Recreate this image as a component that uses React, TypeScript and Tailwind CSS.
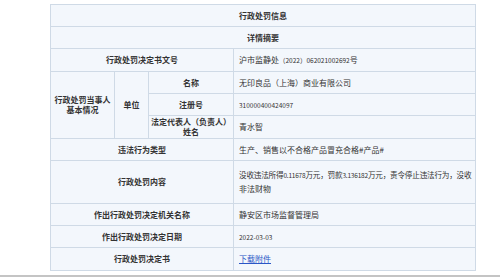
const font = { fontFamily: '"Noto Sans CJK SC", "Noto Sans", sans-serif' };

const label = "border border-[#cfdae6] text-center font-bold text-[#333] text-[8px] leading-[10px]";
const value = "border border-[#cfdae6] text-left pl-[5px] text-[#333] text-[8px]";

function Num({ children }: { children: React.ReactNode }) {
  return <span className="text-[6.5px]">{children}</span>;
}

export default function App() {
  return (
    <div className="w-[500px] h-[277px] bg-white flex flex-col" style={font}>
      <div className="pt-[4px] pl-[50px]">
        <table className="w-[425px] border-collapse bg-[#f3f7fc] table-fixed">
          <colgroup>
            <col className="w-[64px]" />
            <col className="w-[34px]" />
            <col className="w-[85px]" />
            <col className="w-[242px]" />
          </colgroup>
          <tbody>
            <tr className="h-[22px]">
              <td colSpan={4} className={label}>行政处罚信息</td>
            </tr>
            <tr className="h-[22px]">
              <td colSpan={4} className={label}>详情摘要</td>
            </tr>
            <tr className="h-[23px]">
              <td colSpan={3} className={label}>行政处罚决定书文号</td>
              <td className={value}>
                沪市监静处<Num>（2022）062021002692</Num>号
              </td>
            </tr>
            <tr className="h-[22px]">
              <td rowSpan={3} className={label}>
                行政处罚当事人
                <br />
                基本情况
              </td>
              <td rowSpan={3} className={label}>单位</td>
              <td className={label}>名称</td>
              <td className={value}>无印良品（上海）商业有限公司</td>
            </tr>
            <tr className="h-[22px]">
              <td className={label}>注册号</td>
              <td className={value}>
                <Num>310000400424097</Num>
              </td>
            </tr>
            <tr className="h-[23px]">
              <td className={label}>
                法定代表人（负责人）
                <br />
                姓名
              </td>
              <td className={value}>青水智</td>
            </tr>
            <tr className="h-[22px]">
              <td colSpan={3} className={label}>违法行为类型</td>
              <td className={value}>生产、销售以不合格产品冒充合格#产品#</td>
            </tr>
            <tr className="h-[43px]">
              <td colSpan={3} className={label}>行政处罚内容</td>
              <td className={`${value} leading-[14px]`}>
                <div className="whitespace-nowrap text-[7.6px] tracking-[-0.2px]">
                  没收违法所得<Num>0.11678</Num>万元，罚款<Num>3.136182</Num>万元，责令停止违法行为，没收
                </div>
                <div>非法财物</div>
              </td>
            </tr>
            <tr className="h-[22px]">
              <td colSpan={3} className={label}>作出行政处罚决定机关名称</td>
              <td className={value}>静安区市场监督管理局</td>
            </tr>
            <tr className="h-[22px]">
              <td colSpan={3} className={label}>作出行政处罚决定日期</td>
              <td className={value}>
                <Num>2022-03-03</Num>
              </td>
            </tr>
            <tr className="h-[23px]">
              <td colSpan={3} className={label}>行政处罚决定书</td>
              <td className={value}>
                <a href="#" className="text-[#2a56c6] underline">下载附件</a>
              </td>
            </tr>
          </tbody>
        </table>
      </div>
      <div className="mt-auto h-[2px] bg-[#c4c4c4]" />
    </div>
  );
}
